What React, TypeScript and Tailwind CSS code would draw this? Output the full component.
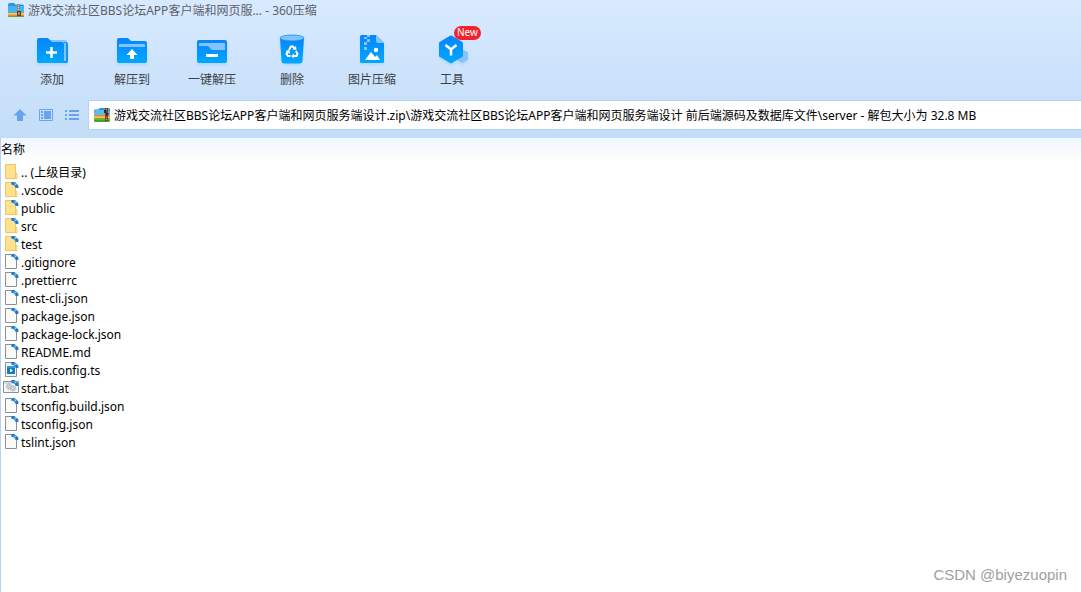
import React from "react";

type FileKind = "folder" | "up" | "file" | "script" | "batch";

const files: { name: string; kind: FileKind }[] = [
  { name: ".. (上级目录)", kind: "up" },
  { name: ".vscode", kind: "folder" },
  { name: "public", kind: "folder" },
  { name: "src", kind: "folder" },
  { name: "test", kind: "folder" },
  { name: ".gitignore", kind: "file" },
  { name: ".prettierrc", kind: "file" },
  { name: "nest-cli.json", kind: "file" },
  { name: "package.json", kind: "file" },
  { name: "package-lock.json", kind: "file" },
  { name: "README.md", kind: "file" },
  { name: "redis.config.ts", kind: "script" },
  { name: "start.bat", kind: "batch" },
  { name: "tsconfig.build.json", kind: "file" },
  { name: "tsconfig.json", kind: "file" },
  { name: "tslint.json", kind: "file" },
];

function AppIcon() {
  return (
    <svg className="size-4 shrink-0" viewBox="0 0 16 16" aria-hidden="true">
      <path d="M0 2Q0 0 1.500 0H6l1.500 1.500h7Q16 1.500 16 3v6H0z" fill="#2c95e2" />
      <path d="M0 3h16v7H0z" fill="#45b4f5" />
      <path d="M0 10h16v1.500H0z" fill="#ffc933" />
      <path d="M0 11.500h16V13H0z" fill="#f08a1c" />
      <path d="M0 13h16v1H0z" fill="#58ad34" />
      <path d="M9.500 1h2v13h-2z" fill="#9a7a60" />
      <path d="M10 2h1v1h-1zM10 4h1v1h-1zM10 6h1v1h-1z" fill="#e9cfae" />
      <path d="M9 8h4v5H9z" fill="#6b3a1c" />
      <path d="M10.500 9h1v3h-1z" fill="#f4d9a0" />
    </svg>
  );
}

function ArchiveIcon() {
  return (
    <svg className="size-4 shrink-0" viewBox="0 0 16 16" aria-hidden="true">
      <path d="M0 4q0-1.500 1.500-1.500H4L6 1h8.500Q16 1 16 2.500V7H0z" fill="#2f93dd" />
      <path d="M0 5l2-2h12l2 2v3H0z" fill="#58bdf2" />
      <path d="M0 8h16v3H0z" fill="#f18a22" />
      <path d="M0 9.500h16V11H0z" fill="#ffc94a" />
      <path d="M0 11h16v2.500q0 1.500-1.500 1.500h-13Q0 15 0 13.500z" fill="#4c9c30" />
      <path d="M0 11.500h16v1H0z" fill="#86c84c" />
      <path d="M11 1h3v13h-3z" fill="#744027" />
      <path d="M12 2h1v1h-1zM12 10h1v1h-1zM12 12h1v1h-1z" fill="#d9a878" />
      <path d="M10 3h2v3h-2zM12 6h2.500v2H12z" fill="#3d2820" />
    </svg>
  );
}

function FileIcon({ kind }: { kind: FileKind }) {
  if (kind === "folder" || kind === "up") {
    return (
      <svg className="size-4 shrink-0" viewBox="0 0 16 16" aria-hidden="true">
        <path d="M1.500 0.500h10v9h1v5h-11z" fill="#ffe290" stroke="#efc75a" />
        <path d="M11.500 10h1.500v4.500h-1.500z" fill="#fff0b8" stroke="#e8bd48" strokeWidth=".7" />
        {kind === "folder" && <Pin />}
      </svg>
    );
  }
  if (kind === "batch") {
    return (
      <svg className="size-4 shrink-0 overflow-visible" viewBox="0 0 16 16" aria-hidden="true">
        <path d="M-0.500 1.500h15v11h-15z" fill="#f5f7f8" stroke="#8b9298" />
        <path d="M0 3h14" stroke="#b4bcc2" />
        <circle cx="5" cy="6.500" r="2.500" fill="#e3e7ea" stroke="#8d969d" strokeDasharray="1.300 .6" />
        <circle cx="5" cy="6.500" r="1" fill="#fff" stroke="#8d969d" strokeWidth=".6" />
        <circle cx="9" cy="8.500" r="2.500" fill="#e3e7ea" stroke="#8d969d" strokeDasharray="1.300 .6" />
        <circle cx="9" cy="8.500" r="1" fill="#fff" stroke="#8d969d" strokeWidth=".6" />
        <Pin />
      </svg>
    );
  }
  return (
    <svg className="size-4 shrink-0" viewBox="0 0 16 16" aria-hidden="true">
      <path d="M1.500 0.500h8l3 3v11h-11z" fill="#f9fafa" stroke="#8d9092" />
      {kind === "script" && (
        <>
          <path d="M3 4h8v8H3z" fill="#0c7cc8" />
          <path d="M3 4h8v2H3z" fill="#2a9be0" />
          <path d="M6 6.500l3 2-3 2z" fill="#fff" />
        </>
      )}
      <Pin />
    </svg>
  );
}

function Pin() {
  return (
    <>
      <path d="M7 0h3.500l2.500 2 1.500 1.500V6h-2.500l-2-2.500L7 2.500z" fill="#4a9ade" />
      <path d="M8 0h2.500v2.500H8zM11.500 3H14v3h-2.500z" fill="#2279bd" />
      <path d="M10.500 1.500l1.500 1.500" stroke="#9ed3f5" />
    </>
  );
}

function BlueGradient({ id }: { id: string }) {
  return (
    <defs>
      <linearGradient id={id} x1="0" y1="0" x2="0" y2="1">
        <stop offset="0" stopColor="#0785fb" />
        <stop offset="1" stopColor="#00a8ff" />
      </linearGradient>
    </defs>
  );
}

const iconClass = "h-8 w-8 drop-shadow-[0_2px_1px_#8fc3f366]";

function AddIcon() {
  return (
    <svg className={iconClass} viewBox="0 0 32 32" aria-hidden="true">
      <BlueGradient id="add" />
      <path d="M14 6h15q2 0 2 2v19H14z" fill="#84c3ff" />
      <path d="M30 8q2 0 2 2v17q0 2-2 2h-2V8z" fill="#0b94fb" />
      <path d="M28 9h2v18h-2z" fill="#84c3ff" />
      <path d="M1 6q0-2 2-2h8q1 0 2 1l3 3h10q2 0 2 2v19H3q-2 0-2-2z" fill="url(#add)" />
      <path d="M15.500 13v11M10 18.500h11" stroke="#fff" strokeWidth="2.500" />
    </svg>
  );
}

function ExtractIcon() {
  return (
    <svg className={iconClass} viewBox="0 0 32 32" aria-hidden="true">
      <BlueGradient id="extract" />
      <path d="M1 6q0-2 2-2h8q1 0 2 1l2 2h14q2 0 2 2v18q0 2-2 2H3q-2 0-2-2z" fill="url(#extract)" />
      <path d="M3 13v-2q0-1 1-1h24q1 0 1 1v2z" fill="#84c3ff" />
      <path d="M16 15l5.500 6H18v4h-4v-4h-3.500z" fill="#fff" />
    </svg>
  );
}

function QuickExtractIcon() {
  return (
    <svg className={iconClass} viewBox="0 0 32 32" aria-hidden="true">
      <BlueGradient id="quick" />
      <rect x="1" y="6" width="30" height="23" rx="2" fill="url(#quick)" />
      <path d="M3 12v-2q0-1 1-1h24q1 0 1 1v6H17q-2 0-3-2l-1-1q-1-1-2-1z" fill="#84c3ff" />
      <path d="M10 21.500h12" stroke="#fff" strokeWidth="3" />
    </svg>
  );
}

function DeleteIcon() {
  return (
    <svg className={iconClass} viewBox="0 0 32 32" aria-hidden="true">
      <BlueGradient id="delete" />
      <path d="M4 4l1.500 23q.2 2.500 3 2.500h15q2.800 0 3-2.500l1.500-23z" fill="url(#delete)" />
      <ellipse cx="16" cy="4" rx="12" ry="3" fill="#84c3ff" stroke="#0b91fb" strokeWidth=".8" />
      <g fill="none" stroke="#fff" strokeWidth="2">
        <path d="M13 16l2-3.500h2l1.500 2.500M20 17l1.500 3-1 2H17M14.500 22H12l-1.500-2 1.500-3" />
      </g>
      <path d="M16.500 15.500l4 .5-.5-4zM18 19.500v5L15 22zM9.500 17l4-1 .5 4z" fill="#fff" />
    </svg>
  );
}

function PictureIcon() {
  return (
    <svg className={iconClass} viewBox="0 0 32 32" aria-hidden="true">
      <BlueGradient id="picture" />
      <path d="M4 2.500Q4 1 5.500 1H20l8 8v18.500q0 1.500-1.500 1.500h-21Q4 29 4 27.500z" fill="url(#picture)" />
      <path d="M20 1l8 8h-6q-2 0-2-2z" fill="#84c3ff" />
      <path d="M8 3h3v2H8zM11 1h3v2h-3zM11 5h3v3h-3zM8 8h3v3H8zM8 13h3v3H8z" fill="#84c3ff" />
      <circle cx="20" cy="16" r="2.200" fill="#fff" />
      <path d="M9 26l6-8 4 5 2-2 3 5z" fill="#fff" />
    </svg>
  );
}

function ToolsIcon() {
  return (
    <svg className={iconClass} viewBox="0 0 32 32" aria-hidden="true">
      <BlueGradient id="tools" />
      <path d="M26 15l6 3.500v7L26 29l-6-3.500v-7z" fill="#84c3ff" />
      <path d="M15 1.500q.5 0 1 .3l10 6q1 .6 1 1.700v12q0 1-1 1.600l-10 6q-1 .5-2 0l-10-6q-1-.6-1-1.600v-12q0-1.100 1-1.700l10-6q.5-.3 1-.3z" fill="url(#tools)" />
      <path d="M9.500 11l5.500 4.500 5.500-4.500M15 15v6.500" fill="none" stroke="#fff" strokeWidth="2.500" />
    </svg>
  );
}

const tools: { label: string; icon: React.ReactNode; badge?: string }[] = [
  { label: "添加", icon: <AddIcon /> },
  { label: "解压到", icon: <ExtractIcon /> },
  { label: "一键解压", icon: <QuickExtractIcon /> },
  { label: "删除", icon: <DeleteIcon /> },
  { label: "图片压缩", icon: <PictureIcon /> },
  { label: "工具", icon: <ToolsIcon />, badge: "New" },
];

const path =
  "游戏交流社区BBS论坛APP客户端和网页服务端设计.zip\\游戏交流社区BBS论坛APP客户端和网页服务端设计 前后端源码及数据库文件\\server - 解包大小为 32.8 MB";

export default function App() {
  return (
    <div className="flex min-h-screen flex-col bg-white font-['Noto_Sans','Noto_Sans_CJK_SC',sans-serif] text-xs text-black">
      <header className="bg-linear-to-b from-[#d8eaff] to-[#c3ddf8]">
        <div className="flex h-6 items-center gap-1 pb-0.5 pl-2">
          <AppIcon />
          <h1 className="leading-4 text-[#5c6168]">游戏交流社区BBS论坛APP客户端和网页服... - 360压缩</h1>
        </div>
        <nav className="flex h-[76px] pl-3 pt-2.5" aria-label="工具栏">
          {tools.map((tool) => (
            <button key={tool.label} type="button" className="relative flex w-20 flex-col items-center gap-1.5 text-[#3d4147]">
              {tool.icon}
              <span className="leading-4">{tool.label}</span>
              {tool.badge && (
                <span className="absolute -top-2 left-[42px] h-3.5 rounded-full bg-[#f5222d] px-[3px] text-[10px] leading-[13px] text-white">
                  {tool.badge}
                </span>
              )}
            </button>
          ))}
        </nav>
        <div className="flex h-[38px] items-start">
          <div className="flex h-[30px] w-[88px] shrink-0 items-center gap-3 pl-[13px] text-[#69a3ee]">
            <button type="button" aria-label="向上">
              <svg className="size-3.5" viewBox="0 0 14 14" fill="currentColor" aria-hidden="true">
                <path d="M7 1l6.500 6.500H10V13H4V7.500H.5z" />
              </svg>
            </button>
            <button type="button" aria-label="预览">
              <svg className="size-3.5" viewBox="0 0 14 14" fill="currentColor" aria-hidden="true">
                <path d="M.5 1.500h13v11H.5z" fill="none" stroke="currentColor" />
                <path d="M2 3h2v2H2zM2 6h2v2H2zM2 9h2v2H2zM5 3h7v8H5z" />
              </svg>
            </button>
            <button type="button" aria-label="列表">
              <svg className="size-3.5" viewBox="0 0 14 14" fill="currentColor" aria-hidden="true">
                <path d="M0 2h2v2H0zM0 6h2v2H0zM0 10h2v2H0zM4 2h10v2H4zM4 6h10v2H4zM4 10h10v2H4z" />
              </svg>
            </button>
          </div>
          <div className="flex h-[30px] min-w-0 flex-1 items-center gap-1 border border-r-0 border-[#b5d4f4] bg-white pl-[5px]">
            <ArchiveIcon />
            <input aria-label="路径" className="h-5 min-w-0 flex-1 bg-transparent pt-px leading-5 outline-none" readOnly value={path} />
          </div>
        </div>
      </header>
      <main className="flex flex-1 flex-col justify-between border-l border-[#b5d0f2]">
        <table className="w-full border-collapse text-left">
          <thead>
            <tr className="bg-linear-to-b from-[#f0f7fe] to-white">
              <th className="h-[25px] pb-0.5 font-normal leading-4">名称</th>
            </tr>
          </thead>
          <tbody>
            {files.map((file) => (
              <tr key={file.name}>
                <td className="p-0">
                  <div className="flex h-[18px] items-center gap-px pl-[3px]">
                    <FileIcon kind={file.kind} />
                    <span className="pt-0.5 leading-4">{file.name}</span>
                  </div>
                </td>
              </tr>
            ))}
          </tbody>
        </table>
        <footer className="flex justify-end px-3.5 pb-[5px] font-['Liberation_Sans',sans-serif] text-[15px] leading-6 text-[#a0a0a0]">
          CSDN @biyezuopin
        </footer>
      </main>
    </div>
  );
}
